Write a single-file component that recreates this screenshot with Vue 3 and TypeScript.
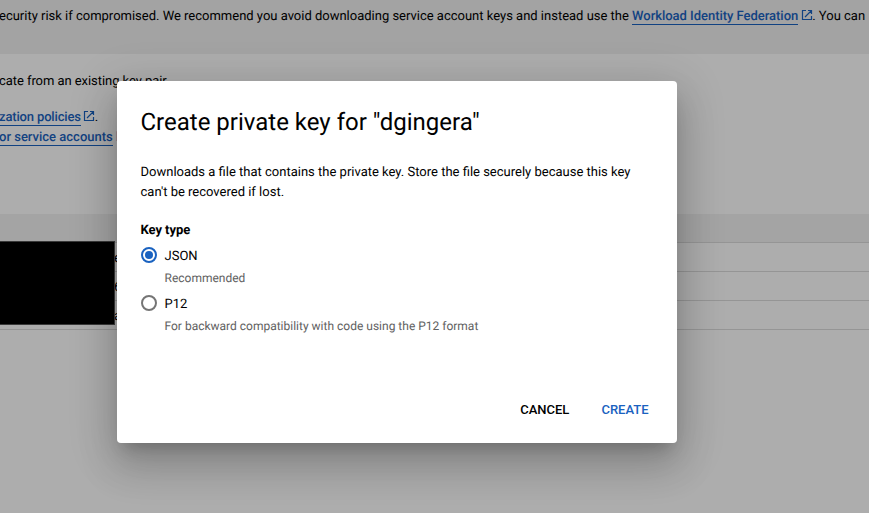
<script setup lang="ts">
import { ref } from 'vue'

interface KeyOption {
  value: string
  label: string
  hint: string
}

const keyOptions: KeyOption[] = [
  { value: 'json', label: 'JSON', hint: 'Recommended' },
  { value: 'p12', label: 'P12', hint: 'For backward compatibility with code using the P12 format' },
]

const selected = ref<string>('json')
const rows: string[] = ['e', '6', 'a']
</script>

<template>
  <div class="screen">
    <main class="page">
      <div class="banner">
        <span class="banner-text">ecurity risk if compromised. We recommend you avoid downloading service account keys and instead use the <a class="link">Workload Identity Federation</a><svg class="ext" viewBox="0 0 12 12"><path d="M5 1.5H1.5v9h9V7M7 1.5h3.5V5M10.5 1.5L4 8" /></svg>. You can</span>
      </div>
      <section class="intro">
        <p class="line first">cate from an existing key pair.</p>
        <p class="line policies"><a class="link">zation policies</a><svg class="ext" viewBox="0 0 12 12"><path d="M5 1.5H1.5v9h9V7M7 1.5h3.5V5M10.5 1.5L4 8" /></svg>.</p>
        <p class="line accounts"><a class="link">or service accounts</a> <a class="link plain">h</a></p>
      </section>
      <section class="table">
        <div class="table-head"></div>
        <div v-for="row in rows" :key="row" class="table-row">{{ row }}</div>
      </section>
    </main>
    <div class="backdrop"></div>
    <div class="redacted"></div>
    <div class="dialog" role="dialog">
      <h2 class="title">Create private key for "dgingera"</h2>
      <p class="description">Downloads a file that contains the private key. Store the file securely because this key<br />can't be recovered if lost.</p>
      <h3 class="group-title">Key type</h3>
      <div class="options">
        <div v-for="option in keyOptions" :key="option.value" class="option" @click="selected = option.value">
          <span class="radio" :class="{ checked: selected === option.value }"></span>
          <div class="option-text">
            <span class="label">{{ option.label }}</span>
            <span class="hint">{{ option.hint }}</span>
          </div>
        </div>
      </div>
      <div class="actions">
        <button class="button cancel" type="button">CANCEL</button>
        <button class="button create" type="button">CREATE</button>
      </div>
    </div>
  </div>
</template>

<style>
body {
  margin: 0;
  overflow: hidden;
}
</style>

<style scoped>
.screen {
  position: relative;
  width: 869px;
  height: 513px;
  overflow: hidden;
  background: #fff;
  color: #000;
  font-family: Roboto, "Liberation Sans", sans-serif;
  font-size: 13px;
  line-height: 20px;
  text-rendering: geometricPrecision;
}
.page {
  display: flex;
  flex-direction: column;
}
.banner {
  box-sizing: border-box;
  height: 54px;
  padding-top: 7px;
  background: #f0f0f0;
  white-space: nowrap;
}
.banner-text {
  margin-left: -1px;
  letter-spacing: -0.006px;
}
.link {
  color: #1a62c0;
  font-weight: 500;
  letter-spacing: -0.03px;
  border-bottom: 1px solid #1a62c0;
}
.link.plain {
  border: 0;
}
.ext {
  width: 12px;
  height: 12px;
  margin-left: 2.5px;
  margin-right: -0.5px;
  vertical-align: -1px;
  fill: none;
  stroke: #1a62c0;
  stroke-width: 1.2;
}
.intro {
  height: 142px;
  padding-top: 18px;
}
.line {
  margin: 0 0 0 -1px;
  white-space: nowrap;
}
.first {
  letter-spacing: -0.06px;
}
.policies {
  margin-top: 16px;
}
.policies .link {
  letter-spacing: -0.15px;
}
.accounts .link {
  letter-spacing: 0;
}
.table-head {
  height: 28px;
  background: #f2f2f2;
  border-bottom: 1px solid #dcdcdc;
}
.table-row {
  height: 28px;
  padding-left: 114px;
  line-height: 32px;
  border-bottom: 1px solid #dcdcdc;
}
.backdrop {
  position: absolute;
  inset: 0;
  background: rgba(0, 0, 0, 0.32);
}
.redacted {
  position: absolute;
  left: 0;
  top: 241px;
  box-sizing: border-box;
  width: 115px;
  height: 84px;
  border: 1px solid #3a3a3a;
  border-left: 0;
  background: #000;
}
.dialog {
  position: absolute;
  left: 117px;
  top: 81px;
  box-sizing: border-box;
  width: 560px;
  height: 362px;
  padding: 25px 20.5px 15px 23.5px;
  display: flex;
  flex-direction: column;
  border-radius: 4px;
  background: #fff;
  box-shadow: 0 11px 15px -7px rgba(0, 0, 0, 0.2), 0 24px 38px 3px rgba(0, 0, 0, 0.14), 0 9px 46px 8px rgba(0, 0, 0, 0.12);
}
.title {
  margin: 0;
  font-size: 24px;
  font-weight: 400;
  line-height: 32px;
  white-space: nowrap;
}
.description {
  margin: 25px 0 0;
  white-space: nowrap;
}
.group-title {
  margin: 18px 0 0;
  font-size: 13px;
  font-weight: 700;
  line-height: 20px;
  letter-spacing: -0.06px;
}
.options {
  margin-top: -2px;
}
.option {
  display: flex;
  gap: 8px;
  height: 48px;
}
.radio {
  box-sizing: border-box;
  flex: none;
  width: 16px;
  height: 16px;
  margin-top: 8px;
  display: grid;
  place-items: center;
  border: 2px solid #757575;
  border-radius: 50%;
}
.radio.checked {
  border-color: #1a62c0;
}
.radio.checked::after {
  content: "";
  width: 8px;
  height: 8px;
  border-radius: 50%;
  background: #1a62c0;
}
.option-text {
  display: flex;
  flex-direction: column;
  padding-top: 8px;
}
.label {
  line-height: 20px;
}
.hint {
  margin-top: 2px;
  color: #616161;
  font-size: 12px;
  line-height: 18px;
}
.actions {
  margin-top: auto;
  display: flex;
  justify-content: flex-end;
  gap: 16px;
}
.button {
  height: 36px;
  padding: 0 8px;
  border: 0;
  background: none;
  color: #000;
  font: 500 13px/36px Roboto, "Liberation Sans", sans-serif;
}
.create {
  color: #1a62c0;
}
</style>
